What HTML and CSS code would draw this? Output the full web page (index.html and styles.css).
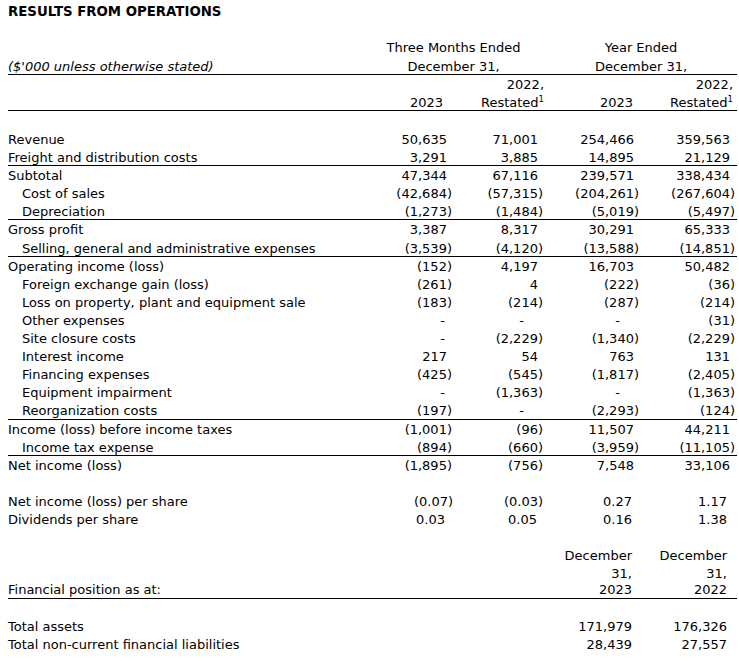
FILE: index.html
```html
<!DOCTYPE html>
<html>
<head>
<meta charset="utf-8">
<link rel="stylesheet" href="styles.css">
</head>
<body>
<div class="title">RESULTS FROM OPERATIONS</div>
<table class="fin">
  <colgroup>
    <col class="c-label"><col class="c-1"><col class="c-2"><col class="c-3"><col class="c-4">
  </colgroup>
  <tbody>
    <tr class="hd hd-top"><td></td><td colspan="2" class="ctr">Three Months Ended</td><td colspan="2" class="ctr">Year Ended</td></tr>
    <tr class="hd line"><td class="unit">($'000 unless otherwise stated)</td><td colspan="2" class="ctr">December 31,</td><td colspan="2" class="ctr">December 31,</td></tr>
    <tr class="hd"><td></td><td></td><td class="h2">2022,</td><td></td><td class="h4">2022,</td></tr>
    <tr class="hd line"><td></td><td class="h1">2023</td><td class="h2">Restated<sup>1</sup></td><td class="h3">2023</td><td class="h4">Restated<sup>1</sup></td></tr>
    <tr class="blank blank-top"><td colspan="5"></td></tr>

    <tr><td>Revenue</td><td class="v">50,635</td><td class="v">71,001</td><td class="v">254,466</td><td class="v">359,563</td></tr>
    <tr class="line"><td>Freight and distribution costs</td><td class="v">3,291</td><td class="v">3,885</td><td class="v">14,895</td><td class="v">21,129</td></tr>
    <tr><td>Subtotal</td><td class="v">47,344</td><td class="v">67,116</td><td class="v">239,571</td><td class="v">338,434</td></tr>
    <tr><td class="ind">Cost of sales</td><td class="n">(42,684)</td><td class="n">(57,315)</td><td class="n">(204,261)</td><td class="n">(267,604)</td></tr>
    <tr class="line"><td class="ind">Depreciation</td><td class="n">(1,273)</td><td class="n">(1,484)</td><td class="n">(5,019)</td><td class="n">(5,497)</td></tr>
    <tr><td>Gross profit</td><td class="v">3,387</td><td class="v">8,317</td><td class="v">30,291</td><td class="v">65,333</td></tr>
    <tr class="line"><td class="ind">Selling, general and administrative expenses</td><td class="n">(3,539)</td><td class="n">(4,120)</td><td class="n">(13,588)</td><td class="n">(14,851)</td></tr>
    <tr><td>Operating income (loss)</td><td class="n">(152)</td><td class="v">4,197</td><td class="v">16,703</td><td class="v">50,482</td></tr>
    <tr><td class="ind">Foreign exchange gain (loss)</td><td class="n">(261)</td><td class="v">4</td><td class="n">(222)</td><td class="n">(36)</td></tr>
    <tr><td class="ind">Loss on property, plant and equipment sale</td><td class="n">(183)</td><td class="n">(214)</td><td class="n">(287)</td><td class="n">(214)</td></tr>
    <tr><td class="ind">Other expenses</td><td class="d1">-</td><td class="d2">-</td><td class="d3">-</td><td class="n">(31)</td></tr>
    <tr><td class="ind">Site closure costs</td><td class="d1">-</td><td class="n">(2,229)</td><td class="n">(1,340)</td><td class="n">(2,229)</td></tr>
    <tr><td class="ind">Interest income</td><td class="v">217</td><td class="v">54</td><td class="v">763</td><td class="v">131</td></tr>
    <tr><td class="ind">Financing expenses</td><td class="n">(425)</td><td class="n">(545)</td><td class="n">(1,817)</td><td class="n">(2,405)</td></tr>
    <tr><td class="ind">Equipment impairment</td><td class="d1">-</td><td class="n">(1,363)</td><td class="d3">-</td><td class="n">(1,363)</td></tr>
    <tr class="line"><td class="ind">Reorganization costs</td><td class="n">(197)</td><td class="d2">-</td><td class="n">(2,293)</td><td class="n">(124)</td></tr>
    <tr><td>Income (loss) before income taxes</td><td class="n">(1,001)</td><td class="n">(96)</td><td class="v">11,507</td><td class="v">44,211</td></tr>
    <tr class="line"><td class="ind">Income tax expense</td><td class="n">(894)</td><td class="n">(660)</td><td class="n">(3,959)</td><td class="n">(11,105)</td></tr>
    <tr><td>Net income (loss)</td><td class="n">(1,895)</td><td class="n">(756)</td><td class="v">7,548</td><td class="v">33,106</td></tr>
    <tr class="blank"><td colspan="5"></td></tr>

    <tr><td>Net income (loss) per share</td><td class="e1n">(0.07)</td><td class="e2n">(0.03)</td><td class="e3">0.27</td><td class="e4">1.17</td></tr>
    <tr><td>Dividends per share</td><td class="e1">0.03</td><td class="e2">0.05</td><td class="e3">0.16</td><td class="e4">1.38</td></tr>
    <tr class="blank"><td colspan="5"></td></tr>

    <tr class="fp"><td></td><td></td><td></td><td class="e3">December</td><td class="e4">December</td></tr>
    <tr class="fp"><td></td><td></td><td></td><td class="e3">31,</td><td class="e4">31,</td></tr>
    <tr class="fp line"><td>Financial position as at:</td><td></td><td></td><td class="e3">2023</td><td class="e4">2022</td></tr>
    <tr class="blank"><td colspan="5"></td></tr>

    <tr><td>Total assets</td><td></td><td></td><td class="e3">171,979</td><td class="e4">176,326</td></tr>
    <tr><td>Total non-current financial liabilities</td><td></td><td></td><td class="e3">28,439</td><td class="e4">27,557</td></tr>
  </tbody>
</table>
</body>
</html>
```
FILE: styles.css
```css
html, body {
  margin: 0;
  padding: 0;
  background: #ffffff;
}

body {
  padding: 4px 0 0 8px;
  font-family: "DejaVu Sans", Verdana, sans-serif;
  font-size: 13px;
  color: #000000;
}

.title {
  font-weight: bold;
  font-size: 13.3px;
  line-height: 15px;
  margin-bottom: 19px;
}

.fin {
  border-collapse: separate;
  border-spacing: 0;
  width: 729px;
  table-layout: fixed;
}

.c-label { width: 354px; }
.c-1 { width: 92px; }
.c-2 { width: 91px; }
.c-3 { width: 96px; }
.c-4 { width: 96px; }

.fin td {
  height: 18.1px;
  line-height: 16px;
  padding: 2px 2px 0 0;
  white-space: nowrap;
  text-align: right;
  box-sizing: border-box;
  vertical-align: top;
}

.fin td:first-child {
  text-align: left;
  padding-right: 0;
}

.fin tr.hd td { height: 18px; }
.fin tr.hd-top td { height: 19px; line-height: 19px; padding-top: 0; }

.fin tr.line td {
  border-bottom: 1px solid #000000;
  line-height: 15px;
}

.fin tr.blank td { height: 18.1px; }
.fin tr.blank-top td { height: 19px; }

.fin td.ctr { text-align: center; padding-right: 0; }

.fin td.unit { font-style: italic; }

.fin td.ind { padding-left: 14px; }

.fin td.v { padding-right: 7px; }
.fin td.n { padding-right: 2px; }

.fin td.d1 { padding-right: 9px; }
.fin td.d2 { padding-right: 21px; }
.fin td.d3 { padding-right: 21px; }

.fin td.h1 { padding-right: 11px; }
.fin td.h2 { padding-right: 1px; }
.fin td.h3 { padding-right: 8px; }
.fin td.h4 { padding-right: 4px; }

.fin td.e1n { padding-right: 1px; }
.fin td.e1 { padding-right: 9px; }
.fin td.e2n { padding-right: 2px; }
.fin td.e2 { padding-right: 8px; }
.fin td.e3 { padding-right: 9px; }
.fin td.e4 { padding-right: 10px; }

.fin sup {
  font-size: 8.5px;
  line-height: 0;
  vertical-align: 5px;
}

.fin tr.fp td { height: 17.5px; line-height: 15px; }
.fin tr.fp.line td { line-height: 14.5px; }
```
